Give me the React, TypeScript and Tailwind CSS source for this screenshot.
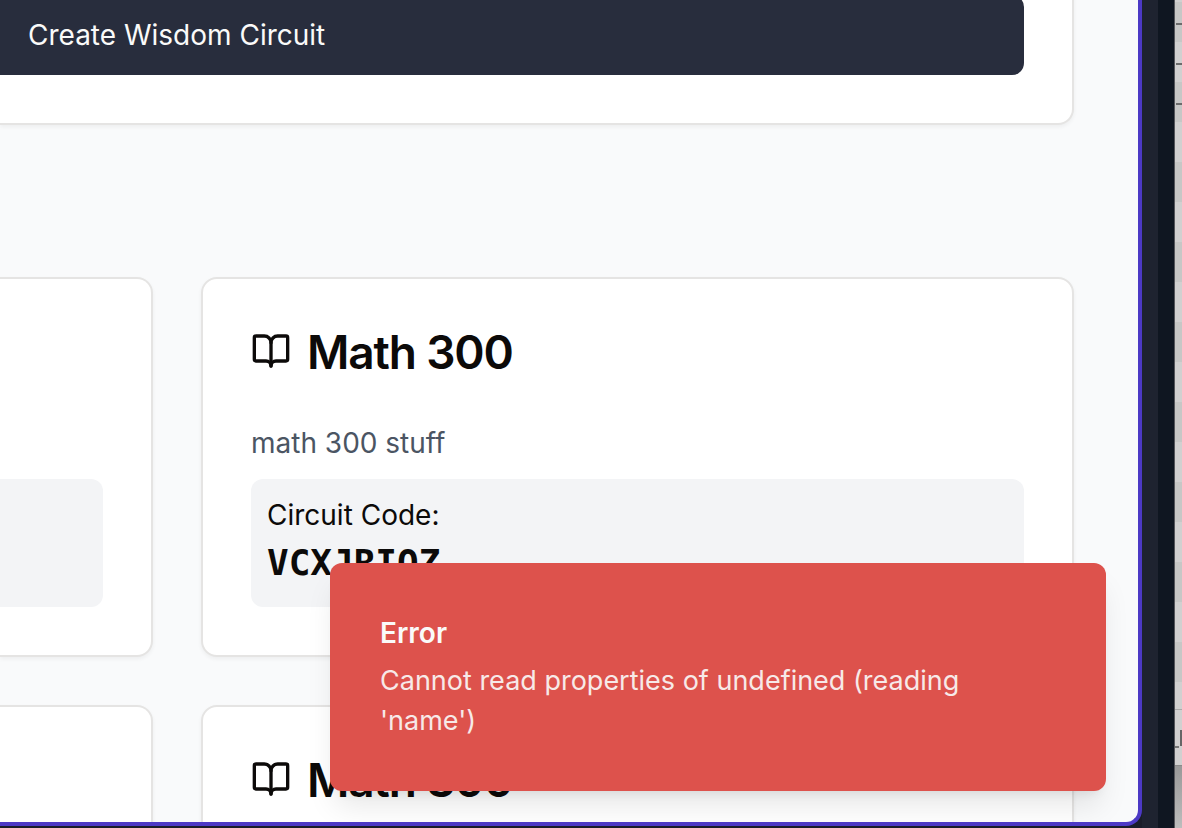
import { BookOpen } from "lucide-react";

type Circuit = { name: string; description?: string; code?: string };

const circuits: Circuit[] = [
  { name: "Math 300", description: "math 300 stuff", code: "VCXJRIOZ" },
  { name: "Math 300" },
];

const listRows = [true, true, true, ...Array<boolean>(14).fill(false)];

function CircuitCard({ circuit }: { circuit: Circuit }) {
  return (
    <article className="h-[380px] rounded-2xl border-2 border-[#e5e4e3] bg-white p-12 shadow-[0_2px_4px_rgba(0,0,0,0.05)]">
      <div className="flex h-12 items-center gap-4">
        <BookOpen className="size-10 shrink-0" strokeWidth={2} />
        <h2 className="pt-0.5 text-[46px] leading-12 font-semibold tracking-tight">{circuit.name}</h2>
      </div>
      {circuit.description && <p className="mt-12 text-[#4b5563]">{circuit.description}</p>}
      {circuit.code && (
        <div className="mt-4 rounded-xl bg-[#f3f4f6] p-4">
          <p>Circuit Code:</p>
          <p className="font-['DejaVu_Sans_Mono',monospace] text-4xl leading-14 font-bold">{circuit.code}</p>
        </div>
      )}
    </article>
  );
}

function PartialCard() {
  return (
    <article className="h-[380px] rounded-r-2xl border-2 border-l-0 border-[#e5e4e3] bg-white pt-[200px] pr-12 shadow-[0_2px_4px_rgba(0,0,0,0.05)]">
      <div className="h-32 rounded-r-xl bg-[#f3f4f6]" />
    </article>
  );
}

function ListWindow() {
  return (
    <aside className="flex w-2 shrink-0 flex-col overflow-hidden border-l border-[#55565b] bg-[#d1d0d0]">
      <div className="h-0.5 shrink-0" />
      {listRows.map((marked, i) => (
        <div key={i} className="flex h-10 shrink-0 items-center justify-end odd:bg-[#d1d0d0] even:bg-[#c7c7c6]">
          {marked && <span className="mt-1 h-0.5 w-1.5 bg-[#6b6b6b]" />}
        </div>
      ))}
      <div className="flex h-[84px] shrink-0 items-end border-b border-[#8b8b8b] bg-[#d1d0d0]">
        <div className="flex h-14 w-full items-start justify-between border-t border-[#aaa] pt-5">
          <span className="mt-4 h-0.5 w-1 bg-[#777]" />
          <span className="h-4 w-0.5 bg-[#666]" />
        </div>
      </div>
      <div className="grow bg-linear-to-b from-[#999] to-[#bdbdbd]" />
    </aside>
  );
}

export default function App() {
  return (
    <div className="flex h-screen overflow-hidden bg-[#181c29] font-['Inter',sans-serif] text-[28px] leading-10 text-[#0c0a09]">
      <div className="flex min-w-0 grow flex-col bg-[#1a1d2a] pb-0.5">
        <main className="relative min-h-0 grow overflow-hidden rounded-br-2xl border-r-4 border-b-4 border-[#4c39c5] bg-[#f9fafb] pr-16">
          <section className="-mt-[5px] rounded-br-2xl border-r-2 border-b-2 border-[#e5e4e3] bg-white pr-12 pb-12 shadow-[0_2px_4px_rgba(0,0,0,0.05)]">
            <button
              type="button"
              className="flex h-20 w-full items-center rounded-r-xl bg-[#282d3d] pl-7 text-[#fafaf9]"
            >
              Create Wisdom Circuit
            </button>
          </section>
          <section className="mt-[152px] grid grid-cols-[153px_minmax(0,1fr)] gap-12">
            {circuits.map((circuit, i) => (
              <div key={i} className="contents">
                <PartialCard />
                <CircuitCard circuit={circuit} />
              </div>
            ))}
          </section>
          <div
            role="alert"
            className="absolute right-8 bottom-[31px] w-[776px] rounded-xl bg-[#dd524c] p-[50px] text-[#fafaf9] shadow-[0_20px_30px_-6px_rgba(0,0,0,0.1),0_8px_12px_-8px_rgba(0,0,0,0.1)]"
          >
            <p className="font-semibold">Error</p>
            <p className="mt-2 text-[27px] opacity-90">Cannot read properties of undefined (reading 'name')</p>
          </div>
        </main>
      </div>
      <div className="w-4 shrink-0 bg-[#1e2330]" />
      <div className="w-4 shrink-0 bg-[#0f1621]" />
      <ListWindow />
    </div>
  );
}
